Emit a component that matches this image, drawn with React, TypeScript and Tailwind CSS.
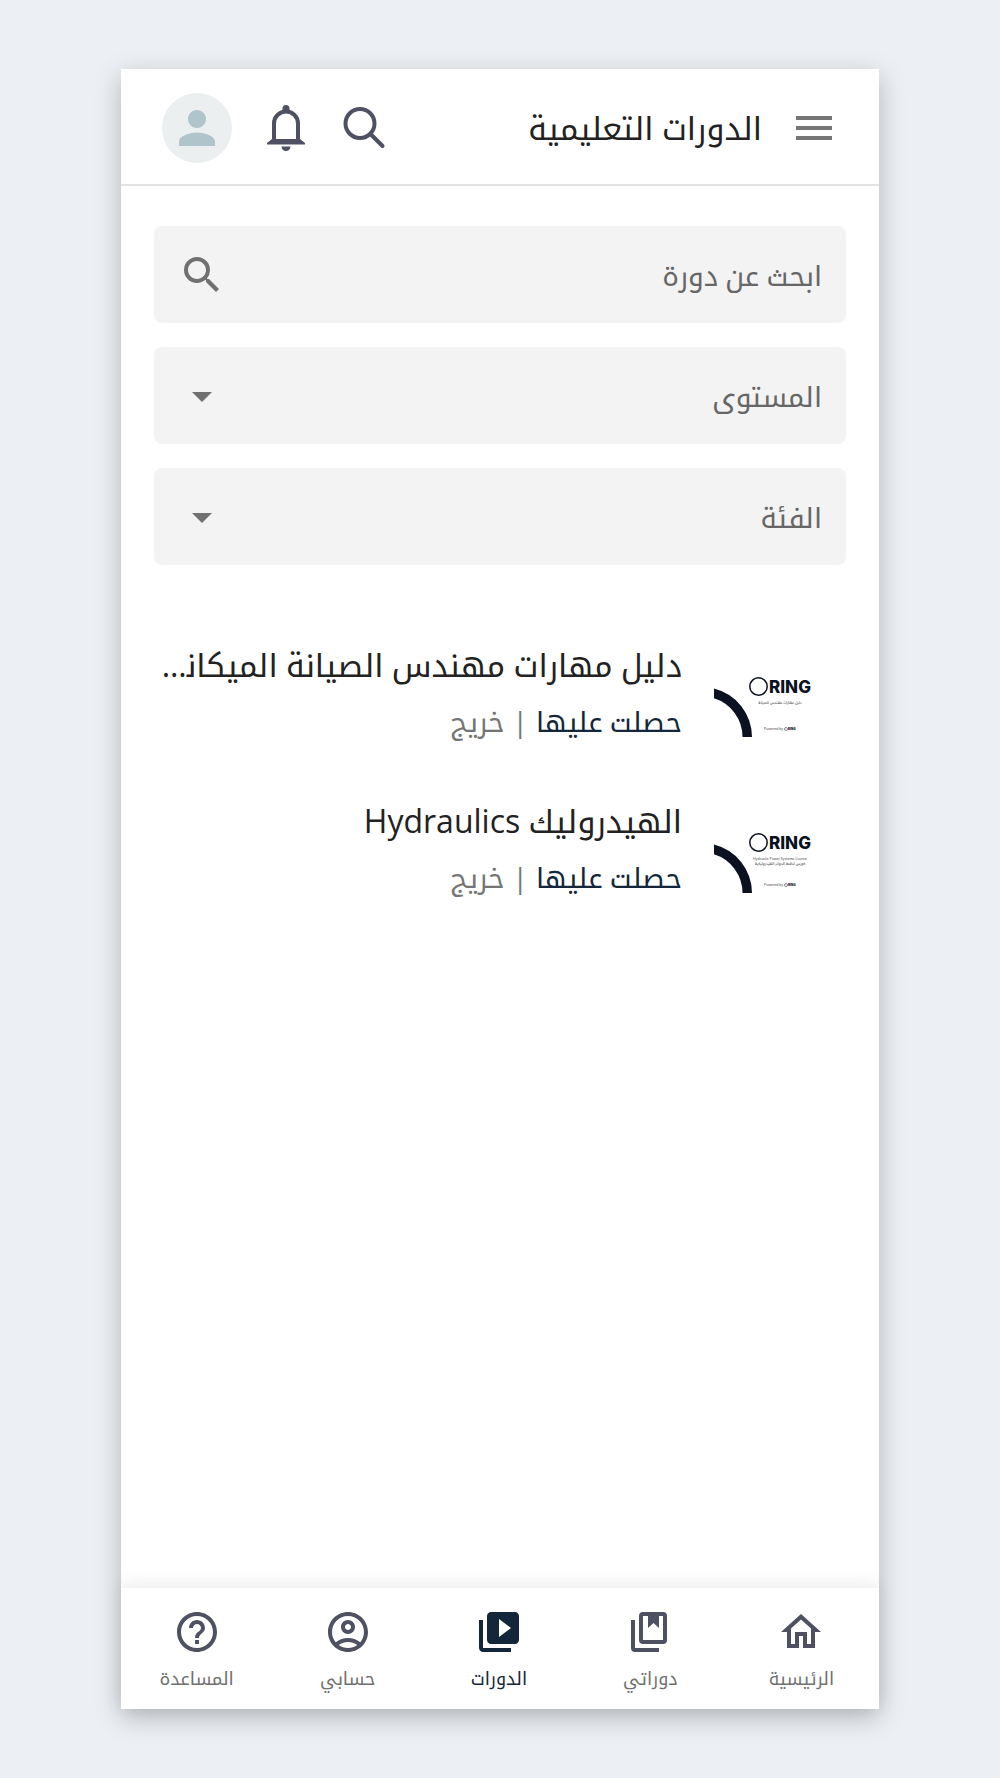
import type { ReactNode } from "react";
import {
  MdArrowDropDown,
  MdHelpOutline,
  MdMenu,
  MdOutlineAccountCircle,
  MdOutlineHome,
  MdPerson,
  MdSearch,
  MdVideoLibrary,
} from "react-icons/md";

interface Course {
  id: string;
  title: string;
  status: string;
  level: string;
  captions: string[];
}

const courses: Course[] = [
  {
    id: "mechanical",
    title: "دليل مهارات مهندس الصيانة الميكانيكية",
    status: "حصلت عليها",
    level: "خريج",
    captions: ["دليل مهارات مهندس الصيانة"],
  },
  {
    id: "hydraulics",
    title: "الهيدروليك Hydraulics",
    status: "حصلت عليها",
    level: "خريج",
    captions: ["Hydraulic Power Systems Course", "كورس أنظمة الدوائر الهيدروليكية"],
  },
];

const navItems = [
  { label: "الرئيسية", icon: MdOutlineHome },
  { label: "دوراتي", icon: BookmarksIcon },
  { label: "الدورات", icon: MdVideoLibrary, active: true },
  { label: "حسابي", icon: MdOutlineAccountCircle },
  { label: "المساعدة", icon: MdHelpOutline },
];

function BookmarksIcon({ className }: { className?: string }) {
  return (
    <svg viewBox="0 0 48 48" className={className} fill="none" stroke="currentColor" strokeWidth="4" aria-hidden="true">
      <rect x="15" y="6" width="24" height="28" rx="2" />
      <path d="M7 12v28a2 2 0 0 0 2 2h24" />
      <path d="M22 6h11v14l-5.500-5-5.500 5z" fill="currentColor" stroke="none" />
    </svg>
  );
}

function BellIcon() {
  return (
    <svg viewBox="0 0 48 48" className="size-12" fill="none" aria-hidden="true">
      <path d="M12 37V19.500a12 12 0 0 1 24 0V37" stroke="currentColor" strokeWidth="4" />
      <path d="M20.500 9V4.500a3.500 3.500 0 0 1 7 0V9z" fill="currentColor" />
      <path d="M10 35 5 39v1.500h38V39l-5-4z" fill="currentColor" />
      <path d="M19.500 42.500h9a4.500 4.500 0 0 1-9 0z" fill="currentColor" />
    </svg>
  );
}

function ThinSearchIcon() {
  return (
    <svg viewBox="0 0 48 48" className="size-12" fill="none" stroke="currentColor" aria-hidden="true">
      <circle cx="20" cy="19.500" r="14.500" strokeWidth="4" />
      <path d="M31 30.500 42.500 42" strokeWidth="4" strokeLinecap="round" />
    </svg>
  );
}

function Thumbnail({ captions }: { captions: string[] }) {
  return (
    <svg viewBox="0 0 96 64" className="mt-11 h-16 w-24 shrink-0 overflow-visible" direction="ltr" aria-hidden="true">
      <path d="M0 15.500A50 50 0 0 1 38 64H28.500A40.500 40.500 0 0 0 0 25.300z" fill="#0b1120" />
      <circle cx="44.500" cy="13.500" r="8.700" fill="none" stroke="#0b1120" strokeWidth="1.500" />
      <text x="55" y="20" fontSize="17" className="font-['Inter',sans-serif] font-extrabold" fill="#0b1120">
        RING
      </text>
      {captions.map((line, i) => (
        <text key={line} x="66" y={31 + i * 5} fontSize="3.500" textAnchor="middle" fill="#333">
          {line}
        </text>
      ))}
      <text x="50" y="57" fontSize="3.500" fill="#333">
        Powered by
      </text>
      <circle cx="72" cy="56" r="1.500" fill="none" stroke="#0b1120" strokeWidth="0.500" />
      <text x="74" y="57" fontSize="3" className="font-black" fill="#0b1120">
        RING
      </text>
    </svg>
  );
}

function FilterSelect({ label, children }: { label: string; children?: ReactNode }) {
  return (
    <div className="flex h-[97px] items-center rounded-lg bg-[#f3f3f3] pl-6">
      <select
        aria-label={label}
        defaultValue=""
        className="h-full min-w-0 flex-1 appearance-none bg-transparent px-6 text-[28px] text-[#666] outline-none"
      >
        <option value="">{label}</option>
        {children}
      </select>
      <MdArrowDropDown className="pointer-events-none size-12 text-[#707070]" />
    </div>
  );
}

export default function App() {
  return (
    <div
      dir="rtl"
      className="flex min-h-screen flex-col bg-[#ecf0f5] py-[69px] font-['Open_Sans','Noto_Kufi_Arabic','Droid_Arabic_Kufi','Noto_Sans',sans-serif] text-[#222]"
    >
      <div className="mx-auto flex w-full max-w-[758px] flex-1 flex-col bg-white shadow-[0_8px_24px_rgba(0,0,0,0.25)]">
        <header className="flex h-[117px] items-center border-b-2 border-[#e3e3e3] px-[41px] pt-0.5">
          <button type="button" aria-label="القائمة" className="text-[#757575]">
            <MdMenu className="size-12" />
          </button>
          <h1 className="mr-7 flex-1 text-[32px] leading-[48px]">الدورات التعليمية</h1>
          <div className="flex items-center gap-[30px] text-[#4e5162]">
            <button type="button" aria-label="بحث">
              <ThinSearchIcon />
            </button>
            <button type="button" aria-label="الإشعارات">
              <BellIcon />
            </button>
            <button
              type="button"
              aria-label="الملف الشخصي"
              className="flex size-[70px] items-center justify-center rounded-full bg-[#ebefef] text-[#b0c4cb]"
            >
              <MdPerson className="size-[54px]" />
            </button>
          </div>
        </header>

        <main className="flex-1 px-[33px] pt-10">
          <form className="flex flex-col gap-6">
            <div className="flex h-[97px] items-center rounded-lg bg-[#f3f3f3] pl-6">
              <input
                type="text"
                aria-label="ابحث عن دورة"
                placeholder="ابحث عن دورة"
                className="h-full min-w-0 flex-1 bg-transparent px-6 text-[28px] outline-none placeholder:text-[#666]"
              />
              <button type="submit" aria-label="ابحث" className="text-[#707070]">
                <MdSearch className="size-12" />
              </button>
            </div>
            <FilterSelect label="المستوى">
              <option>خريج</option>
            </FilterSelect>
            <FilterSelect label="الفئة" />
          </form>

          <ul className="mt-16">
            {courses.map((course) => (
              <li key={course.id} className="flex h-[156px] items-start gap-8 pr-9">
                <Thumbnail captions={course.captions} />
                <div className="min-w-0 flex-1 pt-2">
                  <h2 className="truncate text-[32px] leading-[56px]">{course.title}</h2>
                  <p className="flex gap-2 text-[28px] leading-[56px] text-[#757575]">
                    <span className="text-[#14273a]">{course.status}</span>
                    <span>|</span>
                    <span>{course.level}</span>
                  </p>
                </div>
              </li>
            ))}
          </ul>
        </main>

        <nav className="grid h-[121px] grid-cols-5 bg-white pr-0.5 shadow-[0_-4px_16px_rgba(0,0,0,0.08)]">
          {navItems.map(({ label, icon: Icon, active }) => (
            <a
              key={label}
              href="#"
              aria-current={active ? "page" : undefined}
              className={`flex flex-col items-center pt-5 ${active ? "text-[#14273a]" : "text-[#4e5162]"}`}
            >
              <Icon className="size-12" />
              <span className={`mt-2 text-[18px] leading-[28px] ${active ? "text-[#14273a]" : "text-[#707070]"}`}>
                {label}
              </span>
            </a>
          ))}
        </nav>
      </div>
    </div>
  );
}
